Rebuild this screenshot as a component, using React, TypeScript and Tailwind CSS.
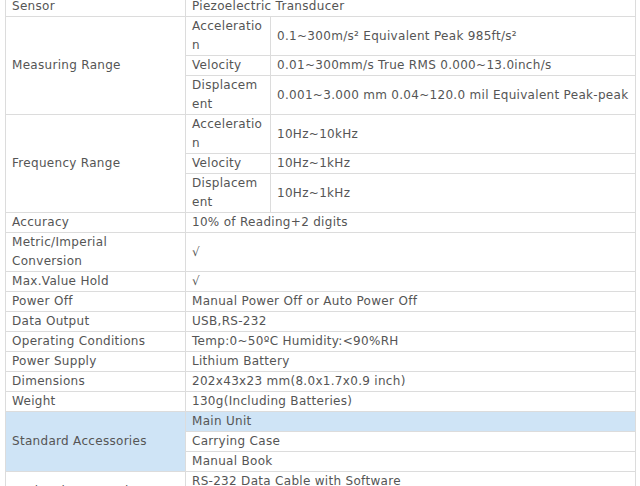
export default function App() {
  const td = "border border-[#dcdcdc] px-[6px] py-0 align-middle";
  const td2 = "border border-[#dcdcdc] px-[6px] py-0 align-middle break-all";
  const rows2: [string, string][] = [
    ["Accuracy", "10% of Reading+2 digits"],
    ["Metric/Imperial Conversion", "√"],
    ["Max.Value Hold", "√"],
    ["Power Off", "Manual Power Off or Auto Power Off"],
    ["Data Output", "USB,RS-232"],
    ["Operating Conditions", "Temp:0~50ºC Humidity:<90%RH"],
    ["Power Supply", "Lithium Battery"],
    ["Dimensions", "202x43x23 mm(8.0x1.7x0.9 inch)"],
    ["Weight", "130g(Including Batteries)"],
  ];
  const sub = (label: string, a: string, b: string, c: string, va: string, vb: string, vc: string) => (
    <>
      <tr>
        <td rowSpan={3} className={td}>{label}</td>
        <td className={td2}>{a}</td>
        <td className={td}>{va}</td>
      </tr>
      <tr>
        <td className={td2}>{b}</td>
        <td className={td}>{vb}</td>
      </tr>
      <tr>
        <td className={td2}>{c}</td>
        <td className={td}>{vc}</td>
      </tr>
    </>
  );
  return (
    <div className="w-[640px] h-[486px] overflow-hidden bg-white">
      <table
        className="ml-[5px] mt-[-4px] w-[631px] border-collapse table-fixed text-[12px] leading-[19px] text-[#555] tracking-[0.3px]"
        style={{ fontFamily: '"DejaVu Sans", Verdana, sans-serif' }}
      >
        <colgroup>
          <col className="w-[180px]" />
          <col className="w-[85px]" />
          <col />
        </colgroup>
        <tbody>
          <tr>
            <td className={td}>Sensor</td>
            <td className={td} colSpan={2}>Piezoelectric Transducer</td>
          </tr>
          {sub("Measuring Range", "Acceleration", "Velocity", "Displacement",
            "0.1~300m/s² Equivalent Peak 985ft/s²",
            "0.01~300mm/s True RMS 0.000~13.0inch/s",
            "0.001~3.000 mm 0.04~120.0 mil Equivalent Peak-peak")}
          {sub("Frequency Range", "Acceleration", "Velocity", "Displacement",
            "10Hz~10kHz", "10Hz~1kHz", "10Hz~1kHz")}
          {rows2.map(([k, v]) => (
            <tr key={k}>
              <td className={td}>{k}</td>
              <td className={td} colSpan={2}>{v}</td>
            </tr>
          ))}
          <tr className="bg-[#cfe4f6]">
            <td rowSpan={3} className={td}>Standard Accessories</td>
            <td className={td} colSpan={2}>Main Unit</td>
          </tr>
          <tr className="bg-white">
            <td className={td} colSpan={2}>Carrying Case</td>
          </tr>
          <tr className="bg-white">
            <td className={td} colSpan={2}>Manual Book</td>
          </tr>
          <tr>
            <td rowSpan={2} className={td}>Optional Accessories</td>
            <td className={td} colSpan={2}>RS-232 Data Cable with Software</td>
          </tr>
          <tr>
            <td className={td} colSpan={2}>Bluetooth Data Adapter with Software</td>
          </tr>
        </tbody>
      </table>
    </div>
  );
}
